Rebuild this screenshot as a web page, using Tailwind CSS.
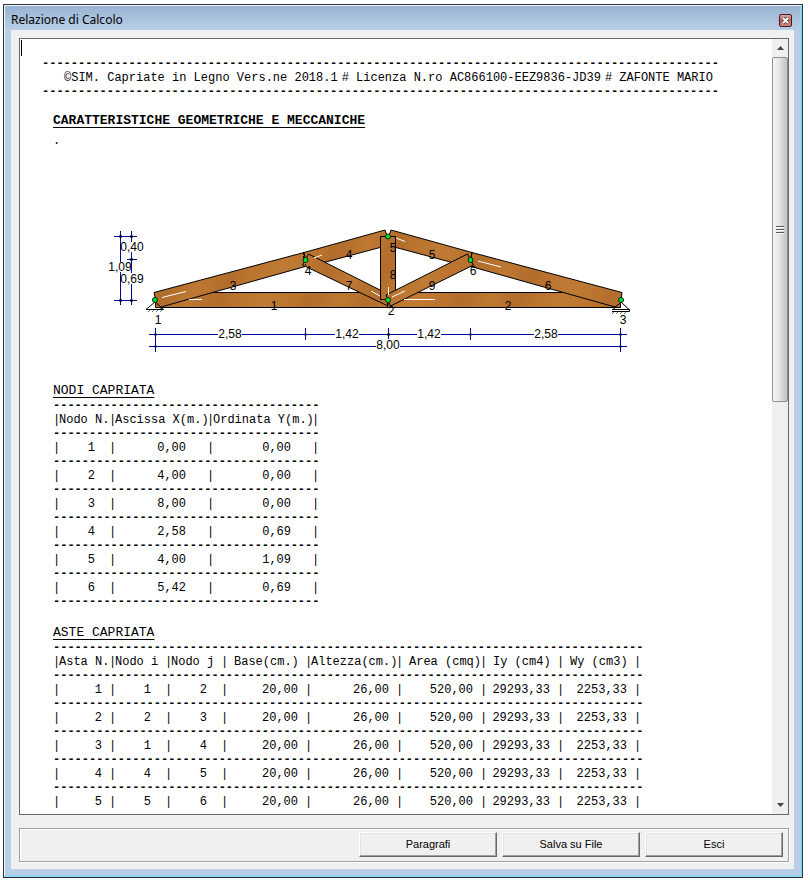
<!DOCTYPE html>
<html lang="it">
<head>
  <meta charset="UTF-8" />
  <meta name="viewport" content="width=device-width, initial-scale=1.0"/>
  <title>Relazione di Calcolo</title>
  <script src="https://cdn.jsdelivr.net/npm/@tailwindcss/browser@4"></script>
</head>
<body class="bg-white text-black">
  <div class="h-screen flex flex-col pt-1 pb-[3px] pl-[3px] pr-[7px]">
    <!-- Window frame -->
    <div class="flex-1 min-h-0 flex flex-col border border-[#2b3238] bg-[#b9cfe7]">
      <div class="flex-1 min-h-0 flex flex-col border-l border-t border-r-2 border-b-2 border-l-[#f4f8fc] border-t-[#f4f8fc] border-r-[#8fd4f3] border-b-[#8fd4f3]">
        <header class="h-6 shrink-0 flex items-center justify-between pl-[6px] pr-2 pt-1 bg-linear-to-b from-[#98b3d1] to-[#b9cfe7]">
          <h1 class="font-['Noto_Sans',sans-serif] text-[12px] leading-4">Relazione di Calcolo</h1>
          <button aria-label="Chiudi" class="size-[13px] flex items-center justify-center rounded-[2px] border border-[#4c1520] bg-linear-to-b from-[#dda9a4] via-[#b8605c] to-[#c98a84]">
            <svg class="size-[9px] shrink-0" viewBox="0 0 9 9"><path d="M2 2L7 7M7 2L2 7" stroke="#4a3a44" stroke-width="3.400"/><path d="M2 2L7 7M7 2L2 7" stroke="#fff" stroke-width="2"/></svg>
          </button>
        </header>

        <div class="flex-1 min-h-0 flex flex-col mx-[6px] mb-[6px] p-2 pr-[5px] pb-[7px] bg-[#f0f0f0]">
          <!-- Report -->
          <div class="flex-1 min-h-0 flex border border-[#696969] bg-white">
            <main class="flex-1 min-w-0 overflow-hidden font-['Liberation_Mono',monospace] text-[12px] leading-[14px]">
              <div class="h-4 w-px ml-px mt-px bg-black"></div>
              <div class="ml-[22px] mt-px whitespace-nowrap">
                <p id="topRule" class="font-bold"></p>
                <p class="flex gap-1 pl-[22px]">
                  <span>©SIM. Capriate in Legno Vers.ne 2018.1</span>
                  <span># Licenza N.ro AC866100-EEZ9836-JD39</span>
                  <span># ZAFONTE MARIO</span>
                </p>
                <p id="bottomRule" class="font-bold"></p>
              </div>
              <h2 class="ml-[33px] mt-[14px] text-[13px] leading-4 font-bold underline underline-offset-[3px] decoration-1">CARATTERISTICHE GEOMETRICHE E MECCANICHE</h2>
              <p class="ml-[33px] mt-1 leading-4">.</p>

              <svg class="block ml-20 mt-[71px] w-[540px] h-[140px] font-['Liberation_Sans',sans-serif] text-[12px]" viewBox="100 220 540 140" fill="none">
                <defs>
                  <linearGradient id="wood" gradientUnits="userSpaceOnUse" x1="150" y1="230" x2="210" y2="260" spreadMethod="reflect">
                    <stop offset="0" stop-color="#bf7b36"/>
                    <stop offset=".45" stop-color="#b8722e"/>
                    <stop offset=".6" stop-color="#b26c2c"/>
                    <stop offset="1" stop-color="#bd7832"/>
                  </linearGradient>
                </defs>
                <!-- supports -->
                <g stroke="#000">
                  <path d="M155 302L146 309.500H163.500L155 302M161 306V309" fill="#fff"/>
                  <path d="M148 312l2-2M152 312l2-2M156 312l2-2M160 312l2-2" stroke="#777"/>
                  <path d="M621 302L613 309.500H629L621 302" fill="#fff"/>
                  <path d="M612 309.500H629.500V311.500H612"/>
                  <path d="M612 314l2-2M616 314l2-2M620 314l2-2M624 314l2-2" stroke="#777"/>
                </g>
                <!-- beams -->
                <g fill="url(#wood)" stroke="#000">
                  <path d="M155.500 292.500H387.500V307.500H155.500Z"/>
                  <path d="M387.500 292.500H620.500V307.500H387.500Z"/>
                  <path d="M154 292.500L304 252.500L307 266L161 307L156.500 303Z"/>
                  <path d="M622 292.500L472 252.500L469 266L615 307L620.500 303Z"/>
                  <path d="M304 252.500L385 230L387.500 237V245.500L307 267L305.500 259Z"/>
                  <path d="M472 252.500L391 230L388.500 237V245.500L469 267L470.500 259Z"/>
                  <path d="M308.500 254L388 294V306L302.500 265L305.500 260Z"/>
                  <path d="M380.500 236.500H395.500V299.500H380.500Z"/>
                  <path d="M467.500 254L386 295L388 300L390.500 306L473.500 265L470.500 260Z"/>
                </g>
                <path d="M303.500 252V259M471.500 252V264M305.500 260V265M387.500 302V308" stroke="#000" stroke-dasharray="3 1"/>
                <path d="M162 297.500L186 291.500M189 299.500H202M314 258L322 255M371 291L380 296M388.500 287V295M392 297L405 291M404 299.500H435M396 238L405 241.500M478 261L501 267" stroke="#fff"/>
                <g fill="#00e52c" stroke="#102010">
                  <circle cx="155" cy="300" r="2.500"/><circle cx="305.500" cy="260" r="2.500"/>
                  <circle cx="388" cy="236.500" r="2.500"/><circle cx="388" cy="300" r="2.500"/>
                  <circle cx="470.500" cy="260" r="2.500"/><circle cx="621" cy="300" r="2.500"/>
                </g>
                <!-- dimension lines -->
                <path stroke="#0000a8" d="M114 236.500H137M127 259.500H137M114 300.500H137M120.500 231V262M120.500 272V305M131.500 231V242M131.500 252V273M131.500 284V305M149 334.500H218M242 334.500H335M359 334.500H417M441 334.500H534M558 334.500H627M149 346.500H376M400 346.500H627M155.500 328V352M305.500 328V340M388.500 328V339M470.500 328V340M620.500 328V352"/>
                <path stroke="#000" stroke-width="2" d="M119 236.500h3M119 300.500h3M130 236.500h3M130 259.500h3M130 300.500h3M154.500 334.500h2M154.500 346.500h2M304.500 334.500h2M387 334.500h3M469.500 334.500h2M619.500 334.500h2M619.500 346.500h2"/>
                <g fill="#000" text-anchor="middle">
                  <text x="132" y="251">0,40</text><text x="120" y="271">1,09</text><text x="132" y="283">0,69</text>
                  <text x="230" y="338">2,58</text><text x="347" y="338">1,42</text><text x="429" y="338">1,42</text>
                  <text x="546" y="338">2,58</text><text x="388" y="349">8,00</text>
                  <text x="274" y="310">1</text><text x="508" y="310">2</text><text x="233" y="290">3</text>
                  <text x="349" y="259">4</text><text x="432" y="259">5</text><text x="548" y="290">6</text>
                  <text x="349" y="290">7</text><text x="393" y="279">8</text><text x="432" y="290">9</text>
                  <text x="158" y="324">1</text><text x="391" y="315">2</text><text x="623" y="324">3</text>
                  <text x="308" y="275">4</text><text x="393" y="252">5</text><text x="473" y="275">6</text>
                </g>
              </svg>

              <h2 class="ml-[33px] mt-[23px] text-[13px] leading-4 underline underline-offset-[3px] decoration-1">NODI CAPRIATA</h2>
              <table id="nodi" class="ml-[33px] table-fixed w-[266px]"></table>
              <h2 class="ml-[33px] mt-4 text-[13px] leading-4 underline underline-offset-[3px] decoration-1">ASTE CAPRIATA</h2>
              <table id="aste" class="ml-[33px] table-fixed w-[588px]"></table>
            </main>

            <!-- Scrollbar -->
            <div class="w-4 shrink-0 flex flex-col bg-[#efefef]">
              <button aria-label="Su" class="h-[18px] flex items-center justify-center">
                <svg class="w-[7px] h-1" viewBox="0 0 7 4"><path d="M3.500 0L7 4H0Z" fill="#444"/></svg>
              </button>
              <div class="h-[345px] flex flex-col items-center justify-center gap-px rounded-[2px] border border-[#8f8f8f] bg-linear-to-r from-[#f6f6f6] via-[#e3e3e4] to-[#bfc0c4]">
                <div class="w-2 h-[2px] border-t border-[#555] bg-white"></div>
                <div class="w-2 h-[2px] border-t border-[#555] bg-white"></div>
                <div class="w-2 h-[2px] border-t border-[#555] bg-white"></div>
              </div>
              <button aria-label="Giù" class="h-[18px] mt-auto flex items-center justify-center">
                <svg class="w-[7px] h-1" viewBox="0 0 7 4"><path d="M0 0H7L3.500 4Z" fill="#444"/></svg>
              </button>
            </div>
          </div>

          <!-- Buttons -->
          <div class="shrink-0 mt-[13px] flex justify-end border border-[#a0a0a0] shadow-[inset_1px_1px_0_#fff,1px_1px_0_#fff] gap-[5px] pt-[3px] pb-1 pr-[5px] font-['Liberation_Sans',sans-serif] text-[11px]">
            <button class="w-[138px] h-[25px] border border-t-white border-l-white border-r-[#696969] border-b-[#696969] shadow-[inset_-1px_-1px_0_#a0a0a0,inset_1px_1px_0_#e3e3e3]">Paragrafi</button>
            <button class="w-[138px] h-[25px] border border-t-white border-l-white border-r-[#696969] border-b-[#696969] shadow-[inset_-1px_-1px_0_#a0a0a0,inset_1px_1px_0_#e3e3e3]">Salva su File</button>
            <button class="w-[138px] h-[25px] border border-t-white border-l-white border-r-[#696969] border-b-[#696969] shadow-[inset_-1px_-1px_0_#a0a0a0,inset_1px_1px_0_#e3e3e3]">Esci</button>
          </div>
        </div>
      </div>
    </div>
  </div>

  <script>
    const nodi = [
      ["1", "0,00", "0,00"],
      ["2", "4,00", "0,00"],
      ["3", "8,00", "0,00"],
      ["4", "2,58", "0,69"],
      ["5", "4,00", "1,09"],
      ["6", "5,42", "0,69"]
    ];
    const aste = [["1", "1", "2"], ["2", "2", "3"], ["3", "1", "4"], ["4", "4", "5"], ["5", "5", "6"]]
      .map(a => [...a, "20,00", "26,00", "520,00", "29293,33", "2253,33"]);

    // one entry per column: heading, column width, heading indent, space after the value
    const nodiCols = [
      ["Nodo N.", "w-[56px]", "pl-0", "pr-[14px]"],
      ["Ascissa X(m.)", "w-[98px]", "pl-0", "pr-[21px]"],
      ["Ordinata Y(m.)", "w-[105px]", "pl-0", "pr-[21px]"]
    ];
    const asteCols = [
      ["Asta N.", "w-[56px]", "pl-0", "pr-[7px]"],
      ["Nodo i", "w-[56px]", "pl-0", "pr-[14px]"],
      ["Nodo j", "w-[56px]", "pl-0", "pr-[14px]"],
      ["Base(cm.)", "w-[84px]", "pl-[7px]", "pr-[7px]"],
      ["Altezza(cm.)", "w-[91px]", "pl-0", "pr-[7px]"],
      ["Area (cmq)", "w-[84px]", "pl-[7px]", "pr-[7px]"],
      ["Iy (cm4)", "w-[77px]", "pl-[7px]", "pr-[7px]"],
      ["Wy (cm3)", "w-[77px]", "pl-[7px]", "pr-[7px]"]
    ];

    const bar = '<span class="w-[6px] shrink-0">|</span>';

    function renderTable(id, cols, dashes, rows, closed) {
      const rule = `<tr><td class="p-0 font-bold whitespace-nowrap" colspan="${cols.length + 1}">${"-".repeat(dashes)}</td></tr>`;
      let html = "<colgroup>" + cols.map(c => `<col class="${c[1]}">`).join("") + '<col class="w-[7px]"></colgroup>';
      html += rule + "<tr>" + cols.map(c =>
        `<th class="p-0 font-normal whitespace-nowrap"><div class="flex">${bar}<span class="${c[2]}">${c[0]}</span></div></th>`).join("") +
        `<td class="p-0">${bar}</td></tr>`;
      rows.forEach(row => {
        html += rule + "<tr>" + row.map((v, i) =>
          `<td class="p-0"><div class="flex justify-between">${bar}<span class="${cols[i][3]}">${v}</span></div></td>`).join("") +
          `<td class="p-0">${bar}</td></tr>`;
      });
      document.getElementById(id).innerHTML = html + (closed ? rule : "");
    }

    document.getElementById("topRule").textContent = "-".repeat(94);
    document.getElementById("bottomRule").textContent = "-".repeat(94);
    renderTable("nodi", nodiCols, 37, nodi, true);
    renderTable("aste", asteCols, 82, aste, false);
  </script>
</body>
</html>
